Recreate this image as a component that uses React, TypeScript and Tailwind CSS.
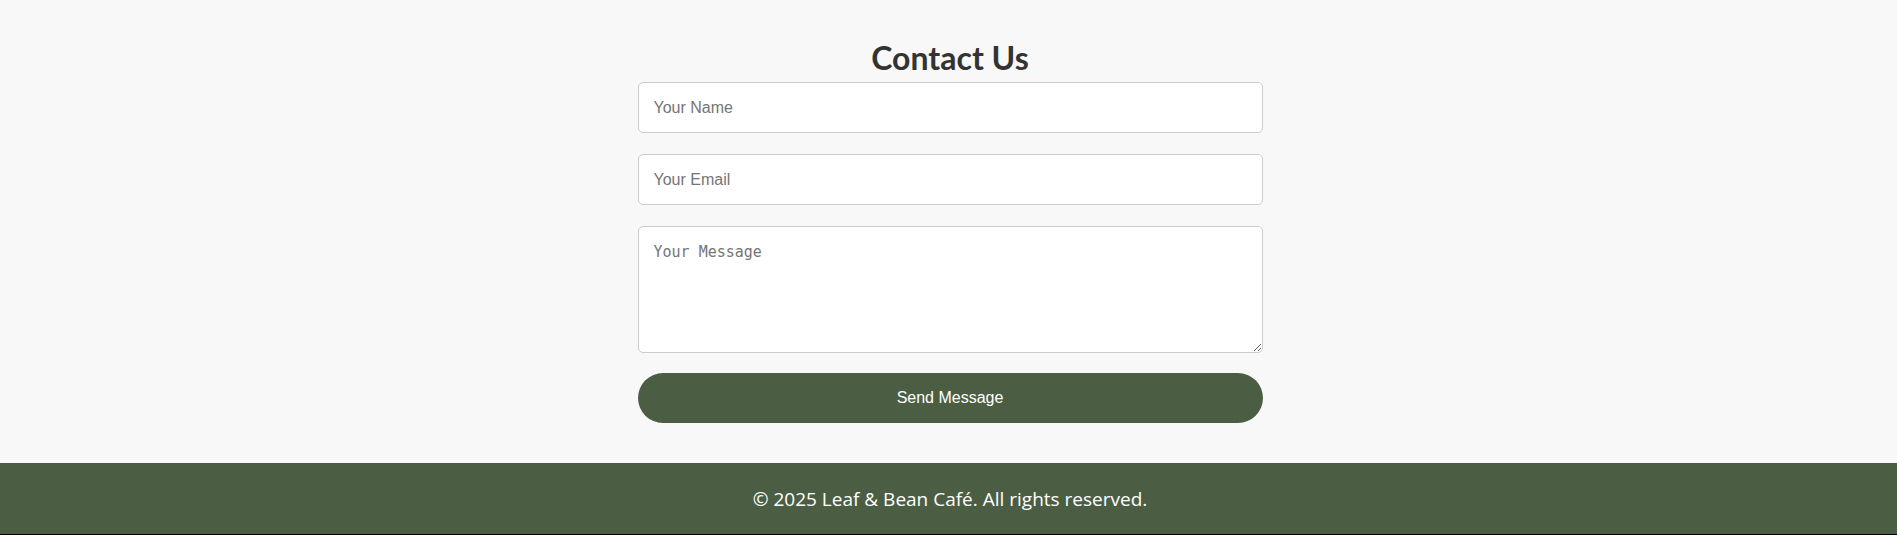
export default function App() {
  return (
    <div className="min-h-[535px] flex flex-col bg-[#f8f8f8] font-['Liberation_Sans',Arial,sans-serif]">
      <section className="flex flex-col items-center pt-[38px] pb-[40px] pl-[3px]">
        <h2 className="text-[32px] leading-[40px] font-bold text-[#333] font-['Lato','Open_Sans',sans-serif] mb-[4px]">
          Contact Us
        </h2>
        <form className="w-[625px] flex flex-col" onSubmit={(e) => e.preventDefault()}>
          <input
            type="text"
            placeholder="Your Name"
            className="h-[51px] px-[15px] bg-white border border-[#cccccc] rounded-[5px] text-[16px] placeholder:text-[#757575] outline-none"
          />
          <input
            type="email"
            placeholder="Your Email"
            className="mt-[21px] h-[51px] px-[15px] bg-white border border-[#cccccc] rounded-[5px] text-[16px] placeholder:text-[#757575] outline-none"
          />
          <textarea
            placeholder="Your Message"
            className="mt-[21px] h-[127px] px-[15px] pt-[16px] pb-[15px] bg-white border border-[#cccccc] rounded-[5px] text-[15px] leading-[18px] font-['DejaVu_Sans_Mono',monospace] placeholder:text-[#757575] outline-none"
          />
          <button
            type="submit"
            className="mt-[20px] h-[50px] rounded-full bg-[#4b5e43] text-white text-[16px]"
          >
            Send Message
          </button>
        </form>
      </section>
      <footer className="h-[72px] flex items-center justify-center pt-[2px] pl-[3px] bg-[#4b5e43] border-b border-black text-white text-[19px] font-['Open_Sans','Noto_Sans',sans-serif]">
        <p>© 2025 Leaf &amp; Bean Café. All rights reserved.</p>
      </footer>
    </div>
  );
}
